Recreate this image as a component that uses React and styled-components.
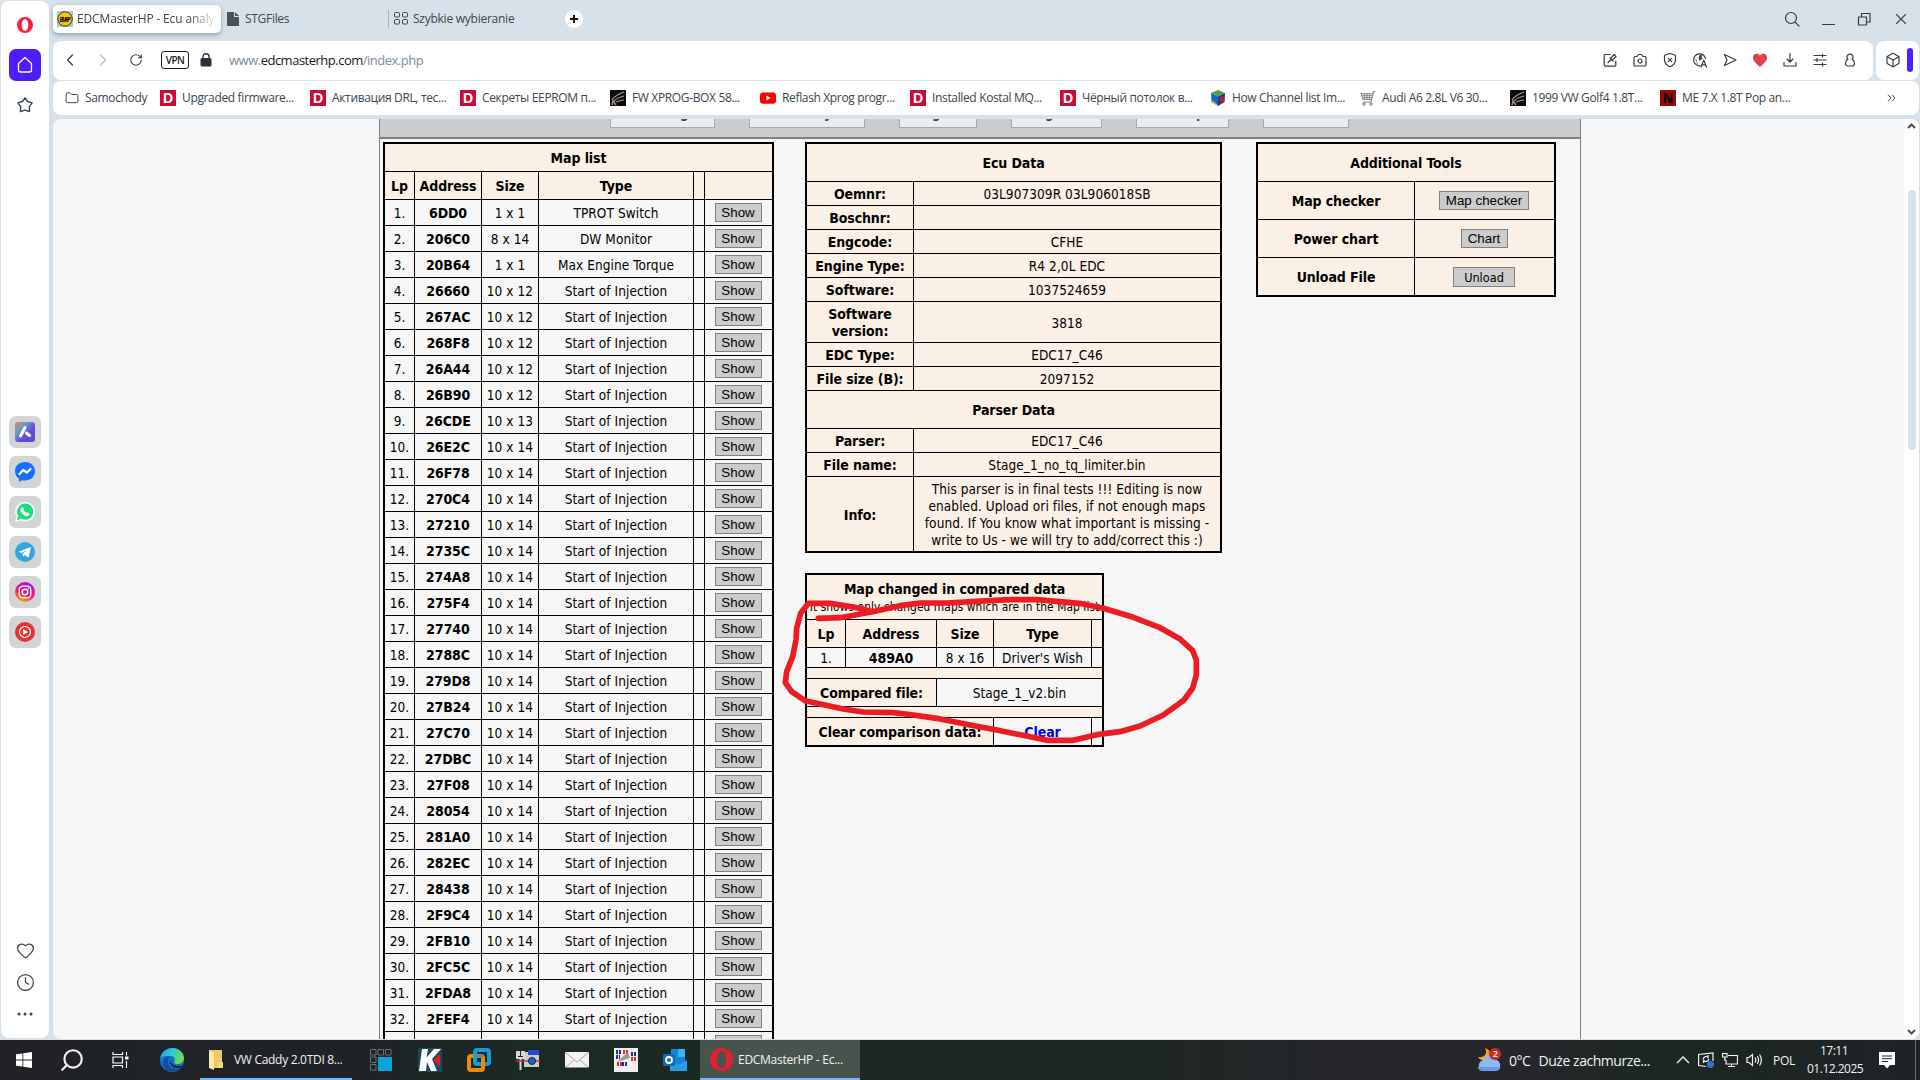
import React from "react";
import styled, { createGlobalStyle } from "styled-components";
import {
  Search,
  Heart,
  Clock,
  Box,
  X,
  ChevronLeft,
  ChevronRight,
  RotateCw,
  Folder,
} from "lucide-react";

const GlobalStyle = createGlobalStyle`
  * {
    box-sizing: border-box;
  }
  body {
    margin: 0;
    overflow: hidden;
    background: #d7e1e9;
    font-family: "Open Sans", "Noto Sans", sans-serif;
  }
`;

const Screen = styled.div`
  display: flex;
  flex-direction: column;
  width: 1920px;
  height: 1080px;
  overflow: hidden;
`;

const Browser = styled.div`
  display: flex;
  gap: 4px;
  height: 1040px;
  padding: 1px 1px 1px;
  background: #d7e1e9;
`;

/* ---------- sidebar ---------- */

const Sidebar = styled.div`
  display: flex;
  flex-direction: column;
  align-items: center;
  width: 48px;
  height: 1037px;
  padding-top: 8px;
  background: #fff;
  border-radius: 8px;
  color: #3a444d;
`;

const SideItem = styled.div`
  display: flex;
  align-items: center;
  justify-content: center;
  width: 32px;
  height: 32px;
  margin-bottom: 8px;
  border-radius: 7px;
  background: ${({ $bg }) => $bg || "transparent"};
  flex: none;
`;

const Messengers = styled.div`
  margin-top: 287px;
`;

const SideBottom = styled.div`
  margin-top: 278px;

  & > div {
    margin-bottom: 0;
  }
`;

/* ---------- tabs ---------- */

const Main = styled.div`
  display: flex;
  flex-direction: column;
  flex: 1;
  min-width: 0;
`;

const TabStrip = styled.div`
  display: flex;
  height: 40px;
  padding-top: 4px;
  color: #3c454d;
`;

const Tab = styled.div`
  display: flex;
  align-items: center;
  gap: ${({ $gap }) => $gap || 4}px;
  width: ${({ $w }) => $w}px;
  height: 28px;
  padding: 0 4px 1px ${({ $pl }) => $pl || 4}px;
  font-size: 12px;
  letter-spacing: ${({ $ls }) => $ls || 0}px;
  white-space: nowrap;
  border-radius: 5px;

  svg {
    flex: none;
  }
`;

const ActiveTab = styled(Tab)`
  background: #fff;
  box-shadow: 0 2px 4px rgba(60, 80, 100, 0.45);
`;

const TabTitle = styled.span`
  flex: 1;
  min-width: 0;
  overflow: hidden;
  mask-image: linear-gradient(90deg, #000 80%, transparent 100%);
`;

const TabDivider = styled.div`
  width: 1px;
  height: 18px;
  margin: 5px 1px 0 0;
  background: #a9b3bb;
`;

const NewTab = styled.div`
  display: flex;
  align-items: center;
  justify-content: center;
  width: 18px;
  height: 18px;
  margin: 5px 0 0 51px;
  border-radius: 9px;
  background: #fff;
`;

const WindowButtons = styled.div`
  display: flex;
  align-items: center;
  height: 28px;
  gap: 20px;
  margin-left: auto;
  margin-right: 9px;
`;

/* ---------- address bar ---------- */

const AddressRow = styled.div`
  display: flex;
  gap: 3px;
  height: 39px;
  margin-bottom: 1px;
`;

const AddressBar = styled.div`
  display: flex;
  align-items: center;
  flex: 1;
  padding: 0 15px 2px 0;
  background: #fff;
  border-radius: 8px;
  color: #343d45;
`;

const NavButton = styled.div`
  display: flex;
  align-items: center;
  justify-content: center;
  width: 33px;
  height: 16px;
  color: ${({ $dim }) => ($dim ? "#b9bec3" : "#343d45")};
`;

const Vpn = styled.div`
  width: 28px;
  height: 18px;
  margin-left: 9px;
  border: 1px solid #15191c;
  border-radius: 3px;
  font-size: 10px;
  font-weight: 600;
  letter-spacing: -0.6px;
  line-height: 16px;
  text-align: center;
  color: #15191c;
`;

const Lock = styled.svg`
  margin-left: 11px;
`;

const Url = styled.div`
  margin-left: 17px;
  font-size: 13px;
  letter-spacing: -0.5px;
  color: #7c8b99;
  white-space: nowrap;

  b {
    font-weight: 400;
    color: #15191c;
  }
`;

const Actions = styled.div`
  display: flex;
  gap: 14px;
  height: 16px;
  margin-left: auto;
`;

const ExtensionBox = styled.div`
  display: flex;
  align-items: center;
  gap: 6px;
  width: 43px;
  padding: 0 0 1px 9px;
  background: #fff;
  border-radius: 8px;
`;

const PurpleBar = styled.div`
  width: 6px;
  height: 24px;
  border-radius: 3px;
  background: #4c1dff;
`;

/* ---------- bookmarks ---------- */

const BookmarkBar = styled.div`
  display: flex;
  align-items: center;
  height: 34px;
  margin-bottom: 4px;
  padding: 0 0 1px 12px;
  background: #fff;
  border-radius: 8px;
  font-size: 12px;
  color: #3c454d;
`;

const Bookmark = styled.div`
  display: flex;
  align-items: center;
  gap: 6px;
  width: ${({ $w }) => $w || 150}px;
  line-height: 16px;
  white-space: nowrap;
  letter-spacing: -0.35px;

  svg {
    flex: none;
  }
`;

const LetterIcon = styled.div`
  width: 16px;
  height: 16px;
  background: ${({ $bg }) => $bg};
  color: ${({ $fg }) => $fg};
  font-family: "Liberation Sans", sans-serif;
  font-size: 14px;
  font-weight: 700;
  line-height: 16px;
  letter-spacing: 0;
  text-align: center;
`;

const More = styled.span`
  display: flex;
  margin-left: auto;
  margin-right: 23px;
`;

/* ---------- page ---------- */

const Page = styled.div`
  display: flex;
  height: 920px;
  padding-left: 326px;
  background: #f6f6f6;
  border-radius: 8px;
  overflow: hidden;
`;

const Site = styled.div`
  width: 1202px;
  border-left: 1px solid #808080;
  border-right: 1px solid #808080;
  font-family: "DejaVu Sans Condensed", "DejaVu Sans", sans-serif;
  font-stretch: condensed;
  font-size: 13.4px;
  line-height: 17px;
  color: #000;
`;

const SiteMenu = styled.div`
  display: flex;
  gap: 34px;
  height: 20px;
  padding-left: 230px;
  background: #ccc;
  border-bottom: 2px solid #808080;
`;

const MenuButton = styled.div`
  width: ${({ $w }) => $w}px;
  height: 9px;
  padding-left: ${({ $pad }) => $pad}px;
  overflow: hidden;
  border: 1px solid #a9a9a9;
  border-top: none;
  background: #ededed;
  color: #2f4f4f;
  font-weight: 700;

  span {
    display: block;
    margin-top: -14px;
  }
`;

const Content = styled.div`
  display: flex;
  align-items: flex-start;
  padding: 3px;
`;

const Middle = styled.div`
  display: flex;
  flex-direction: column;
  align-items: flex-start;
  gap: 20px;
  margin: 0 34px 0 31px;
`;

const Table = styled.div`
  display: grid;
  flex: none;
  grid-template-columns: ${({ $cols }) => $cols};
  grid-template-rows: ${({ $rows }) => $rows || "none"};
  grid-auto-rows: 25px;
  gap: 1px;
  padding: 2px;
  background: #000;
`;

const Cell = styled.div`
  display: flex;
  flex-direction: column;
  align-items: center;
  justify-content: center;
  grid-column: span ${({ $span }) => $span || 1};
  padding-top: ${({ $top }) => $top ?? 1}px;
  background: ${({ $plain }) => ($plain ? "#f6f6f6" : "#faf0e6")};
  text-align: center;
  white-space: ${({ $wrap }) => ($wrap ? "normal" : "nowrap")};
  font-weight: ${({ $bold }) => ($bold ? 700 : 400)};
  font-size: ${({ $bold }) => ($bold ? 14 : 13.5)}px;
  letter-spacing: ${({ $bold }) => ($bold ? -0.1 : 0.08)}px;
  color: ${({ $color }) => $color || "#000"};
`;

const Note = styled.span`
  margin-top: 1px;
  font-size: 11.8px;
  font-weight: 400;
  letter-spacing: 0.1px;
`;

const Button = styled.button`
  height: ${({ $tall }) => ($tall ? 20 : 19)}px;
  width: ${({ $w }) => $w || 47}px;
  margin: ${({ $tall }) => ($tall ? "1px 1px 0 0" : "0 1px 0 0")};
  padding: 1px 0 0;
  border: 1px solid #808080;
  background: #ccc;
  color: #000;
  font-family: ${({ $tall }) =>
    $tall ? '"DejaVu Sans Condensed", "DejaVu Sans"' : '"Liberation Sans"'}, sans-serif;
  font-size: ${({ $tall }) => ($tall ? 12.6 : 13.33)}px;
  line-height: 16px;
`;

const Scrollbar = styled.div`
  display: flex;
  flex-direction: column;
  align-items: center;
  width: 15px;
  height: 920px;
  margin-left: auto;
  padding: 4px 0;
  background: #fff;
`;

const Thumb = styled.div`
  width: 8px;
  height: 260px;
  margin: 61px 0 auto;
  border-radius: 4px;
  background: #d7e1e9;
`;

/* freehand marker stroke lying over the page */
const Marker = styled.svg`
  position: absolute;
  left: 770px;
  top: 560px;
  pointer-events: none;
`;

/* ---------- taskbar ---------- */

const Taskbar = styled.div`
  display: flex;
  height: 40px;
  background: linear-gradient(90deg, #202227 0, #1f2327 370px, #1b2a22 520px, #1b2922 1000px, #24252a 1350px, #26272b 1540px, #1c2722 1640px, #1f2326 100%);
  color: #f2f2f2;
`;

const TaskIcon = styled.div`
  display: flex;
  align-items: center;
  justify-content: center;
  width: ${({ $w }) => $w || 48}px;
  height: 40px;
  padding-left: ${({ $shift }) => $shift || 0}px;
`;

const FlippedSearch = styled(Search)`
  transform: scaleX(-1);
`;

const TaskWindow = styled.div`
  display: flex;
  align-items: center;
  gap: ${({ $gap }) => $gap}px;
  width: ${({ $w }) => $w}px;
  height: 40px;
  padding: 1px 0 0 ${({ $pl }) => $pl || 9}px;
  border-bottom: 2px solid #76b9ed;
  background: ${({ $active }) => ($active ? "#47544d" : "transparent")};
  font-size: 12px;
  letter-spacing: ${({ $ls }) => $ls}px;
  white-space: nowrap;
`;

const Tray = styled.div`
  display: flex;
  align-items: center;
  margin-left: auto;
  font-size: 12px;
  white-space: nowrap;
`;

const Weather = styled.div`
  display: flex;
  align-items: center;
  width: 199px;
  font-size: 14px;
  letter-spacing: -0.45px;

  span {
    margin-left: 8px;
  }
`;

const TrayIcons = styled.div`
  display: flex;
  gap: 8px;
  width: 97px;
`;

const Lang = styled.div`
  width: 34px;
  letter-spacing: -0.3px;
`;

const DateTime = styled.div`
  width: 54px;
  line-height: 18px;
  text-align: center;
  letter-spacing: -0.5px;
`;

const Notifications = styled.svg`
  margin-left: 18px;
`;

const ShowDesktop = styled.div`
  width: 5px;
  height: 40px;
  margin-left: 20px;
  border-left: 1px solid #6d6f71;
`;

/* ---------- drawings ---------- */

const OperaLogo = ({ size = 16, color = "#fa1e3c" }) => (
  <svg width={size} height={size} viewBox="0 0 24 24">
    <path
      fill={color}
      fillRule="evenodd"
      d="M12 0a12 12 0 1 0 0 24a12 12 0 1 0 0-24zM12 3.2c2.9 0 4.9 3.9 4.9 8.8s-2 8.8-4.9 8.8s-4.9-3.9-4.9-8.8s2-8.8 4.9-8.8z"
    />
  </svg>
);

const StarIcon = () => (
  <svg width="18" height="18" viewBox="0 0 18 18" fill="none" stroke="#3a444d" strokeWidth="1.4" strokeLinejoin="round">
    <path d="M9 1.8l2.5 3.7 4.6 1.4-2.7 3.8.1 4.8L9 14.2l-4.5 1.3.1-4.8-2.7-3.8 4.6-1.4z" />
  </svg>
);

const AriaIcon = () => (
  <svg width="20" height="20" viewBox="0 0 20 20">
    <defs>
      <linearGradient id="aria" x1="0" y1="0" x2="1" y2="1">
        <stop offset="0" stopColor="#f08068" />
        <stop offset=".35" stopColor="#5a9ad0" />
        <stop offset=".6" stopColor="#6a48d8" />
        <stop offset="1" stopColor="#4a50c0" />
      </linearGradient>
    </defs>
    <rect width="20" height="20" rx="3" fill="url(#aria)" />
    <path d="M5.5 14L10 5.5M11.5 11l3 2.5" stroke="#fff" strokeWidth="3" strokeLinecap="round" />
  </svg>
);

const MessengerIcon = () => (
  <svg width="20" height="20" viewBox="0 0 20 20">
    <path fill="#1670ff" d="M10 0c5.8 0 10 4 10 9.3s-4.3 9.3-10 9.3c-1 0-2-.2-2.9-.4L4 20v-3.3C1.5 15 0 12.4 0 9.3 0 4 4.2 0 10 0z" />
    <path d="M4.5 12l3.7-4 3.6 2.7L15.500 7" fill="none" stroke="#fff" strokeWidth="2.2" strokeLinejoin="round" strokeLinecap="round" />
  </svg>
);

const WhatsappIcon = () => (
  <svg width="20" height="20" viewBox="0 0 20 20">
    <path fill="#fff" d="M10.2 0A9.8 9.8 0 1 1 5.3 18.3L0 20l1.6-5.2A9.8 9.8 0 0 1 10.2 0z" />
    <circle cx="10.2" cy="9.7" r="8.1" fill="#16e07a" />
    <path d="M2 18l1-4 3 3z" fill="#16e07a" />
    <path d="M6.8 5.5c1.5-1 2 .8 2.3 2-.8 1-.3 1.5 2.3 3.6 1-.9 1.4-1 3.2.6.2 2.2-2.4 3-4.4 2.2C7.3 12.6 4.8 9 5.6 6.9z" fill="#fff" />
  </svg>
);

const TelegramIcon = () => (
  <svg width="20" height="20" viewBox="0 0 20 20">
    <circle cx="10" cy="10" r="10" fill="#34a6de" />
    <path d="M3.5 9.7L15 5.2c.6-.2 1 .1.8.9l-2 8.6c-.1.7-.5.8-1 .5L9.7 13l-1.6 1.5-.5-2.8 5-4.2-6 3.5z" fill="#fff" />
  </svg>
);

const InstagramIcon = () => (
  <svg width="20" height="20" viewBox="0 0 20 20">
    <defs>
      <linearGradient id="insta" x1=".3" y1="1" x2=".7" y2="0">
        <stop offset="0" stopColor="#ffb000" />
        <stop offset=".4" stopColor="#ff1466" />
        <stop offset="1" stopColor="#a010ff" />
      </linearGradient>
    </defs>
    <circle cx="10" cy="10" r="10" fill="url(#insta)" />
    <rect x="4.2" y="4.2" width="11.6" height="11.6" rx="3.5" fill="none" stroke="#fff" strokeWidth="1.4" />
    <circle cx="10" cy="10" r="2.8" fill="none" stroke="#fff" strokeWidth="1.4" />
    <circle cx="13.4" cy="6.7" r=".8" fill="#fff" />
  </svg>
);

const MusicIcon = () => (
  <svg width="20" height="20" viewBox="0 0 20 20">
    <circle cx="10" cy="10" r="10" fill="#e23434" />
    <circle cx="10" cy="10" r="5.5" fill="none" stroke="#fff" strokeWidth="1.2" />
    <path d="M8 7l5 3-5 3z" fill="#fff" />
  </svg>
);

const SiteFavicon = () => (
  <svg width="16" height="16" viewBox="0 0 16 16">
    <rect width="16" height="16" fill="#8fd0ec" />
    <circle cx="8" cy="8" r="7.2" fill="#f5c211" stroke="#4a3d0c" />
    <text x="8" y="10.6" fontSize="6.5" fontWeight="700" fontStyle="italic" textAnchor="middle" textLength="11" fontFamily="Liberation Sans" fill="#1c1600">EMHP</text>
  </svg>
);

const FileIcon = () => (
  <svg width="12" height="14" viewBox="0 0 12 14" fill="#4f5255">
    <path d="M0 0h7v5h5v9H0z" />
    <path d="M8 0l4 4H8z" />
  </svg>
);

const SpeedDialIcon = () => (
  <svg width="14" height="13" viewBox="0 0 14 13" fill="none" stroke="#3c454d">
    <rect x=".5" y=".5" width="5" height="4.5" rx="1" />
    <rect x="8.5" y=".5" width="5" height="4.5" rx="1" />
    <rect x=".5" y="7.5" width="5" height="4.5" rx="1" />
    <rect x="8.5" y="7.5" width="5" height="4.5" rx="1" />
  </svg>
);

const StrokeIcon = ({ d, size = 16, children }) => (
  <svg width={size} height={size} viewBox="0 0 16 16" fill="none" stroke="#343d45" strokeWidth="1.2" strokeLinecap="round" strokeLinejoin="round">
    <path d={d} />
    {children}
  </svg>
);

const ClawIcon = () => (
  <svg width="16" height="16" viewBox="0 0 16 16">
    <rect width="16" height="16" fill="#0b0b0b" />
    <path d="M2 10C5 5 9 4 14 2M4 11c3-3 6-4 10-5M6 12c3-1.5 5-1.8 8-2" stroke="#9a9a98" fill="none" strokeWidth="1.2" />
    <path d="M2 15l1-4 3 4" stroke="#b98a68" fill="none" strokeWidth="1.5" />
  </svg>
);

const YoutubeIcon = () => (
  <svg width="16" height="16" viewBox="0 0 16 16">
    <rect y="2.4" width="16" height="11.4" rx="3" fill="#f00" />
    <path d="M6.3 5.6l4.5 2.5-4.5 2.5z" fill="#fff" />
  </svg>
);

const CubeIcon = () => (
  <svg width="16" height="16" viewBox="0 0 16 16">
    <path d="M8 0l7 3-7 3.5L1 3z" fill="#4aa83c" />
    <path d="M1 3l7 3.5V16l-6.5-4z" fill="#1c62c8" />
    <path d="M15 3L8 6.5V16l6.5-4z" fill="#173a8c" />
    <path d="M13.5 6.5L10.5 8v2l3-.5v2.500L10 13.5" stroke="#d02020" strokeWidth="1.5" fill="none" />
    <path d="M2 11l5 4" stroke="#e8b820" strokeWidth="1.5" />
  </svg>
);

const CartIcon = () => (
  <svg width="16" height="16" viewBox="0 0 16 16" fill="none" stroke="#8f8f8f" strokeWidth="1.2">
    <path d="M1 3.5h12L11.5 9.5H3zM15.5 1.5h-2L11 12H3M2 5.5h10.5M2.5 7.5H12M4.5 3.5v6M7 3.5v6M9.5 3.5v6" />
    <circle cx="4" cy="14" r="1.2" />
    <circle cx="11" cy="14" r="1.2" />
  </svg>
);

const VmwareIcon = () => (
  <svg width="24" height="24" viewBox="0 0 24 24" fill="none" strokeWidth="4">
    <rect x="8" y="2" width="14" height="14" rx="2" stroke="#149bd8" />
    <rect x="2" y="8" width="14" height="14" rx="2" stroke="#f38b00" />
    <path d="M8 12V8h8" stroke="#149bd8" strokeWidth="3" />
  </svg>
);

const EdgeIcon = () => (
  <svg width="24" height="24" viewBox="0 0 24 24">
    <defs>
      <linearGradient id="edgeTop" x1="0" y1="0" x2="1" y2=".4">
        <stop offset="0" stopColor="#1ba0e0" />
        <stop offset=".5" stopColor="#30c4dc" />
        <stop offset="1" stopColor="#66e04c" />
      </linearGradient>
    </defs>
    <circle cx="12" cy="12" r="12" fill="#1272c8" />
    <path d="M.2 10.5C1.5 3.5 7 0 12.5 0 19 0 24 4.8 24 10c0 3.8-2.8 6-6 6-3 0-4.5-1.3-3.5-2.8 1-2-.2-5.2-4.2-5.200C6 7.5 2 8.5.2 10.5z" fill="url(#edgeTop)" />
    <path d="M8 13c0 6 5 9.5 12 7-4 5.3-12 5-15.5 0C1.5 16 3 9.8 9.500 8 8.5 9.5 8 11 8 13z" fill="#0f4fa0" />
    <path d="M10.500 11.500c-.5 5 5 7.800 12 6l-1.500 2C14 21.500 8.500 17.500 10.500 11.500z" fill="#1d2228" />
  </svg>
);

const mapRows = [
  ["6DD0", "1 x 1", "TPROT Switch"],
  ["206C0", "8 x 14", "DW Monitor"],
  ["20B64", "1 x 1", "Max Engine Torque"],
  ["26660", "10 x 12"],
  ["267AC", "10 x 12"],
  ["268F8", "10 x 12"],
  ["26A44", "10 x 12"],
  ["26B90", "10 x 12"],
  ["26CDE", "10 x 13"],
  ...[
    "26E2C", "26F78", "270C4", "27210", "2735C", "274A8", "275F4", "27740",
    "2788C", "279D8", "27B24", "27C70", "27DBC", "27F08", "28054", "281A0",
    "282EC", "28438", "2F9C4", "2FB10", "2FC5C", "2FDA8", "2FEF4",
  ].map((address) => [address, "10 x 14"]),
];

const ecuRows = [
  ["Oemnr:", "03L907309R 03L906018SB"],
  ["Boschnr:", ""],
  ["Engcode:", "CFHE"],
  ["Engine Type:", "R4 2,0L EDC"],
  ["Software:", "1037524659"],
  ["Software version:", "3818"],
  ["EDC Type:", "EDC17_C46"],
  ["File size (B):", "2097152"],
];

const infoLines = [
  "This parser is in final tests !!! Editing is now",
  "enabled. Upload ori files, if not enough maps",
  "found. If You know what important is missing -",
  "write to Us - we will try to add/correct this :)",
];

const dIcon = <LetterIcon $bg="#cc0a34" $fg="#fff">D</LetterIcon>;

const bookmarks = [
  [dIcon, "Upgraded firmware..."],
  [dIcon, "Активация DRL, тес..."],
  [dIcon, "Секреты EEPROM п..."],
  [<ClawIcon />, "FW XPROG-BOX 58..."],
  [<YoutubeIcon />, "Reflash Xprog progr..."],
  [dIcon, "Installed Kostal MQ..."],
  [dIcon, "Чёрный потолок в..."],
  [<CubeIcon />, "How Channel list Im..."],
  [<CartIcon />, "Audi A6 2.8L V6 30..."],
  [<ClawIcon />, "1999 VW Golf4 1.8T..."],
  [<LetterIcon $bg="#980808" $fg="#000">N</LetterIcon>, "ME 7.X 1.8T Pop an..."],
];

const SideBar = () => (
  <Sidebar>
    <SideItem><OperaLogo /></SideItem>
    <SideItem $bg="#4c1dff">
      <svg width="16" height="18" viewBox="0 0 16 18" fill="none" stroke="#fff" strokeWidth="1.3" strokeLinejoin="round">
        <path d="M1.5 7.5L8 1.5l6.5 6v6.5q0 2-2 2h-9q-2 0-2-2z" />
      </svg>
    </SideItem>
    <SideItem><StarIcon /></SideItem>
    <Messengers>
      <SideItem $bg="#d3d4d6"><AriaIcon /></SideItem>
      <SideItem $bg="#d3d4d6"><MessengerIcon /></SideItem>
      <SideItem $bg="#d3d4d6"><WhatsappIcon /></SideItem>
      <SideItem $bg="#d3d4d6"><TelegramIcon /></SideItem>
      <SideItem $bg="#d3d4d6"><InstagramIcon /></SideItem>
      <SideItem $bg="#d3d4d6"><MusicIcon /></SideItem>
    </Messengers>
    <SideBottom>
      <SideItem><Heart size={19} strokeWidth={1.6} /></SideItem>
      <SideItem><Clock size={19} strokeWidth={1.6} /></SideItem>
      <SideItem>
        <svg width="16" height="4" viewBox="0 0 16 4" fill="#3a444d">
          <circle cx="2" cy="2" r="1.5" />
          <circle cx="8" cy="2" r="1.5" />
          <circle cx="14" cy="2" r="1.5" />
        </svg>
      </SideItem>
    </SideBottom>
  </Sidebar>
);

const Tabs = () => (
  <TabStrip>
    <ActiveTab $w={168} $ls={-0.15}>
      <SiteFavicon />
      <TabTitle>EDCMasterHP - Ecu analyzer</TabTitle>
    </ActiveTab>
    <Tab $w={167} $gap={6} $pl={6} $ls={-0.3}>
      <FileIcon />
      STGFiles
    </Tab>
    <TabDivider />
    <Tab $w={124} $gap={5} $ls={-0.25}>
      <SpeedDialIcon />
      Szybkie wybieranie
    </Tab>
    <NewTab>
      <svg width="10" height="10" viewBox="0 0 10 10" stroke="#15191c" strokeWidth="2">
        <path d="M5 1v8M1 5h8" />
      </svg>
    </NewTab>
    <WindowButtons>
      <StrokeIcon d="M11.300 11.300L15 15">
        <circle cx="7" cy="7" r="5.5" />
      </StrokeIcon>
      <StrokeIcon d="M2.500 13.500h12" />
      <StrokeIcon d="M2.500 6h8v8h-8zM5.500 6V2.500H14V11h-3.500" />
      <X size={18} strokeWidth={1.5} />
    </WindowButtons>
  </TabStrip>
);

const Address = () => (
  <AddressRow>
    <AddressBar>
      <NavButton><ChevronLeft size={20} strokeWidth={1.5} /></NavButton>
      <NavButton $dim><ChevronRight size={20} strokeWidth={1.5} /></NavButton>
      <NavButton><RotateCw size={14} strokeWidth={1.8} /></NavButton>
      <Vpn>VPN</Vpn>
      <Lock width="12" height="14" viewBox="0 0 12 14">
        <rect x=".5" y="5" width="11" height="8.5" rx="1.5" fill="#2a333b" />
        <path d="M3 6V3.500a3 2.800 0 0 1 6 0V6" fill="none" stroke="#2a333b" strokeWidth="1.4" />
      </Lock>
      <Url>www.<b>edcmasterhp.com</b>/index.php</Url>
      <Actions>
        <StrokeIcon d="M8 2.500H3q-.8 0-.8.800v10q0 .8.800.8h10q.8 0 .8-.8V9M6 10.500l3-3M8 6l3 3M9 6l3-3.500L14 4.500 10.500 8" />
        <StrokeIcon d="M2 5.500q0-1 1-1h2L6.500 2.500h3L11 4.500h2q1 0 1 1V13q0 1-1 1H3q-1 0-1-1z">
          <circle cx="8" cy="9" r="2" />
        </StrokeIcon>
        <StrokeIcon d="M8 1.500l5.500 1.700V8c0 3.500-2 5.300-5.500 6.700C4.500 13.300 2.500 11.500 2.500 8V3.200zM6.300 6.300l3.400 3.400M9.700 6.300L6.300 9.700" />
        <StrokeIcon d="M8 13.800A6 6 0 1 1 13.500 6.500M9 15l2.800-7 2.700 7M10 12.800h3.700">
          <path d="M8 2.500l2.500 1-1 2 1.500 1.500-2 .5L7.500 9 6.500 6z" fill="#343d45" stroke="none" />
          <path d="M2.500 6L5 8.500 4.500 11 6.500 13z" fill="#343d45" stroke="none" />
        </StrokeIcon>
        <StrokeIcon d="M2.500 2.500L14 8 2.500 13.500 5 8z" />
        <svg width="16" height="16" viewBox="0 0 16 16">
          <path d="M8 15C3 10.500 1 8.500 1 5.500 1 1.500 6 .5 8 3.800 10 .5 15 1.500 15 5.500c0 3-2 5-7 9.500z" fill="#df4344" />
        </svg>
        <StrokeIcon d="M8 1.500v8.500M5 7l3 3 3-3M2 10.500V14h12v-3.500" />
        <StrokeIcon d="M2 3.500h12M2 8h12M2 12.500h12M10.500 2v3M5 6.500v3M10.500 11v3" />
        <StrokeIcon d="M5.900 7.300a3 3 0 1 1 4.200 0C11.500 8 12.500 9.500 12.500 11.500 12.500 13.300 11.500 14 10 14H6C4.500 14 3.500 13.300 3.500 11.500 3.500 9.500 4.500 8 5.900 7.300z" />
      </Actions>
    </AddressBar>
    <ExtensionBox>
      <Box size={16} strokeWidth={1.8} color="#343d45" />
      <PurpleBar />
    </ExtensionBox>
  </AddressRow>
);

const App = () => {
  return (
    <Screen>
      <GlobalStyle />
      <Browser>
        <SideBar />
        <Main>
          <Tabs />
          <Address />
          <BookmarkBar>
            <Bookmark $w={95}>
              <Folder size={14} strokeWidth={1.7} />
              Samochody
            </Bookmark>
            {bookmarks.map(([icon, label]) => (
              <Bookmark key={label}>
                {icon}
                {label}
              </Bookmark>
            ))}
            <More>
              <svg width="9" height="8" viewBox="0 0 9 8" fill="none" stroke="#3c454d">
                <path d="M1 .7L4 4 1 7.300M5 .7L8 4 5 7.300" />
              </svg>
            </More>
          </BookmarkBar>

          <Page>
            <Site>
              <SiteMenu>
                <MenuButton $w={105} $pad={69}><span>g</span></MenuButton>
                <MenuButton $w={116} $pad={74}><span>y</span></MenuButton>
                <MenuButton $w={78} $pad={32}><span>g</span></MenuButton>
                <MenuButton $w={91} $pad={33}><span>g</span></MenuButton>
                <MenuButton $w={93} $pad={59}><span>p</span></MenuButton>
                <MenuButton $w={86} />
              </SiteMenu>
              <Content>
                <Table $cols="29px 66px 56px 154px 10px 67px" $rows="27px 27px">
                  <Cell $bold $span={6}>Map list</Cell>
                  <Cell $bold>Lp</Cell>
                  <Cell $bold>Address</Cell>
                  <Cell $bold>Size</Cell>
                  <Cell $bold>Type</Cell>
                  <Cell />
                  <Cell />
                  {mapRows.map(([address, size, type], i) => (
                    <React.Fragment key={address}>
                      <Cell $plain>{i + 1}.</Cell>
                      <Cell $plain $bold>{address}</Cell>
                      <Cell $plain>{size}</Cell>
                      <Cell $plain>{type || "Start of Injection"}</Cell>
                      <Cell $plain />
                      <Cell $plain $top={0}><Button>Show</Button></Cell>
                    </React.Fragment>
                  ))}
                  <Cell $plain />
                  <Cell $plain />
                  <Cell $plain />
                  <Cell $plain />
                  <Cell $plain />
                  <Cell $plain $top={0}><Button /></Cell>
                </Table>

                <Middle>
                  <Table
                    $cols="106px 306px"
                    $rows="37px repeat(5, 23px) 40px 23px 23px 37px 23px 23px 74px"
                  >
                    <Cell $bold $span={2}>Ecu Data</Cell>
                    {ecuRows.map(([name, value]) => (
                      <React.Fragment key={name}>
                        <Cell $bold $wrap>{name}</Cell>
                        <Cell $top={value === "3818" ? 3 : 1}>{value}</Cell>
                      </React.Fragment>
                    ))}
                    <Cell $bold $span={2}>Parser Data</Cell>
                    <Cell $bold>Parser:</Cell>
                    <Cell>EDC17_C46</Cell>
                    <Cell $bold>File name:</Cell>
                    <Cell>Stage_1_no_tq_limiter.bin</Cell>
                    <Cell $bold $top={3}>Info:</Cell>
                    <Cell>
                      {infoLines.map((line) => (
                        <span key={line}>{line}</span>
                      ))}
                    </Cell>
                  </Table>

                  <Table
                    $cols="38px 90px 56px 97px 10px"
                    $rows="44px 27px 19px 10px 27px 10px 27px"
                  >
                    <Cell $bold $span={5} $top={3}>
                      Map changed in compared data
                      <Note>It shows only changed maps which are in the Map list</Note>
                    </Cell>
                    <Cell $bold>Lp</Cell>
                    <Cell $bold>Address</Cell>
                    <Cell $bold>Size</Cell>
                    <Cell $bold>Type</Cell>
                    <Cell />
                    <Cell $plain>1.</Cell>
                    <Cell $plain $bold>489A0</Cell>
                    <Cell $plain>8 x 16</Cell>
                    <Cell $plain>Driver's Wish</Cell>
                    <Cell $plain />
                    <Cell $span={5} />
                    <Cell $bold $span={2}>Compared file:</Cell>
                    <Cell $plain $span={3}>Stage_1_v2.bin</Cell>
                    <Cell $span={5} />
                    <Cell $bold $span={3}>Clear comparison data:</Cell>
                    <Cell $plain $bold $color="#0000ee">Clear</Cell>
                    <Cell $plain />
                  </Table>
                </Middle>

                <Table $cols="156px 139px" $rows="repeat(4, 37px)">
                  <Cell $bold $span={2}>Additional Tools</Cell>
                  <Cell $bold>Map checker</Cell>
                  <Cell $top={0}><Button $w={90}>Map checker</Button></Cell>
                  <Cell $bold>Power chart</Cell>
                  <Cell $top={0}><Button>Chart</Button></Cell>
                  <Cell $bold>Unload File</Cell>
                  <Cell $top={0}><Button $w={62} $tall>Unload</Button></Cell>
                </Table>
              </Content>
            </Site>
            <Scrollbar>
              <svg width="9" height="6" viewBox="0 0 9 6" fill="none" stroke="#505050" strokeWidth="2">
                <path d="M1 5l3.500-3.500L8 5" />
              </svg>
              <Thumb />
              <svg width="9" height="6" viewBox="0 0 9 6" fill="none" stroke="#505050" strokeWidth="2">
                <path d="M1 1l3.500 3.500L8 1" />
              </svg>
            </Scrollbar>
          </Page>
        </Main>
      </Browser>

      <Marker width="450" height="200" viewBox="0 0 1350 600">
        <path
          fill="none"
          stroke="#ed1c24"
          strokeWidth="17"
          strokeLinecap="round"
          strokeLinejoin="round"
          d="M145 175L210 173 300 157 390 137 450 129 530 129 620 124 720 119 800 119 860 124 935 131 1000 145 1090 172 1170 203 1230 237 1268 272 1279 300 1279 345 1268 385 1240 422 1180 465 1110 498 1050 515 980 524 910 541 830 541 770 528 680 510 600 495 500 475 430 465 370 458 280 456 220 447 105 422 65 395 46 368 50 335 68 290 78 240 80 205 92 160 115 130 180 130 250 141 310 155"
        />
      </Marker>

      <Taskbar>
        <TaskIcon>
          <svg width="16" height="16" viewBox="0 0 16 16" fill="#fff">
            <path d="M0 2.300L6.500 1.400V7.600H0zM7.300 1.300L16 0v7.600H7.300zM0 8.400h6.500v6.200L0 13.700zM7.300 8.400H16V16l-8.700-1.200z" />
          </svg>
        </TaskIcon>
        <TaskIcon>
          <FlippedSearch size={26} strokeWidth={2} />
        </TaskIcon>
        <TaskIcon>
          <svg width="17" height="16" viewBox="0 0 17 16" fill="none" stroke="#fff" strokeWidth="1.2">
            <path d="M1 0v2.500h9.500V0M1 5h9.500v6H1zM1 16v-2.500h9.500V16M14.500 0v3.500M14.500 9v7" />
            <path d="M13 6h3.500" strokeWidth="3" />
          </svg>
        </TaskIcon>
        <TaskIcon $w={56}><EdgeIcon /></TaskIcon>
        <TaskWindow $w={152} $gap={10} $ls={-0.3}>
          <svg width="15" height="20" viewBox="0 0 15 20">
            <path d="M0 0h13v18H0z" fill="#efc864" />
            <path d="M0 0l5 3v17l-5-2z" fill="#fbe8a6" />
            <path d="M9 12h5v6H9z" fill="#f5d77e" />
          </svg>
          VW Caddy 2.0TDI 8...
        </TaskWindow>
        <TaskIcon $w={57}>
          <svg width="22" height="22" viewBox="0 0 22 22">
            <path d="M.5.5H6V6H.5zM8 .5h5.500V6H8zM15.500.5H21V6h-5.500zM.5 8H6v5.500H.5zM.5 15.500H6V21H.5z" fill="none" stroke="#6a7075" />
            <rect x="8" y="8" width="14" height="14" fill="#07a5e0" />
          </svg>
        </TaskIcon>
        <TaskIcon $w={42}>
          <svg width="24" height="24" viewBox="0 0 24 24">
            <rect width="24" height="24" fill="#174a5e" />
            <path d="M4 1h6L8.500 9.500 16 1h7l-9 10 5 12h-6l-4-9-1 9H1z" fill="#fff" />
            <path d="M22 6v13l-7-7z" fill="#e01c28" />
          </svg>
        </TaskIcon>
        <TaskIcon $w={56}><VmwareIcon /></TaskIcon>
        <TaskIcon $w={42}>
          <svg width="24" height="20" viewBox="0 0 24 20">
            <rect x="8" y="2" width="15" height="15" fill="#c8ccd0" />
            <rect x="12" y="0" width="11" height="5" fill="#1c50d0" />
            <path d="M1 1v7h7V1M3 1v5M6 1v5M4.500 8v12" stroke="#d8d8d8" strokeWidth="2" fill="none" />
            <path d="M0 11h24" stroke="#d03030" strokeWidth="1.5" />
            <circle cx="16" cy="11" r="3.5" fill="#2464c8" stroke="#123" />
          </svg>
        </TaskIcon>
        <TaskIcon $w={56}>
          <svg width="24" height="16" viewBox="0 0 24 16">
            <rect width="24" height="15.5" rx="1" fill="#f2f2f2" />
            <path d="M1 1l11 9L23 1M1 15l8-7M23 15l-8-7" stroke="#a8a8a8" fill="none" />
          </svg>
        </TaskIcon>
        <TaskIcon $w={42}>
          <svg width="24" height="24" viewBox="0 0 24 24">
            <rect width="24" height="24" fill="#eeeef0" />
            <path d="M2 4h6M17 6h5M2 9h4M8 16h6" stroke="#22308c" strokeWidth="4" strokeDasharray="2 1" />
            <path d="M9 4h5M17 11h6M3 16h5" stroke="#d83030" strokeWidth="4" strokeDasharray="2 1" />
            <path d="M3 14L14 4l2 6z" fill="#9a9a9a" />
          </svg>
        </TaskIcon>
        <TaskIcon $w={53} $shift={3}>
          <svg width="24" height="22" viewBox="0 0 24 22">
            <rect x="8" y="0" width="14" height="18" fill="#1484d8" />
            <rect x="15" y="0" width="7" height="8" fill="#3ab4f0" />
            <path d="M7 11l8 5 9-5v11H7z" fill="#2a9ce4" />
            <rect x="0" y="5" width="12" height="12" rx="1" fill="#0f6cbd" />
            <circle cx="6" cy="11" r="3" fill="none" stroke="#fff" strokeWidth="1.8" />
          </svg>
        </TaskIcon>
        <TaskWindow $w={160} $gap={5} $pl={10} $active $ls={-0.28}>
          <OperaLogo size={23} color="#e5202e" />
          EDCMasterHP - Ec...
        </TaskWindow>

        <Tray>
          <Weather>
            <svg width="24" height="24" viewBox="0 0 24 24">
              <path d="M8 0c3 5 0 10-7 9 2 5 12 4 12-3 0-3-2-5-5-6z" fill="#f5a728" />
              <path d="M6 23a5.500 5.500 0 0 1-.5-10.500 6.500 6.500 0 0 1 12-1A5.800 5.800 0 0 1 18.500 23z" fill="#8fb8f4" />
              <path d="M6 23a6 6 0 0 1-5.500-4h23c-1 3-3 4-5 4z" fill="#6a9aea" />
              <circle cx="18" cy="6" r="6" fill="#d02a22" />
              <text x="18" y="9" fontSize="9" fontWeight="600" textAnchor="middle" fontFamily="Open Sans" fill="#fff">2</text>
            </svg>
            <span>0°C</span>
            <span>Duże zachmurze...</span>
          </Weather>
          <TrayIcons>
            <svg width="14" height="16" viewBox="0 0 14 16" fill="none" stroke="#f2f2f2" strokeWidth="1.4">
              <path d="M1 11l6-6 6 6" />
            </svg>
            <svg width="16" height="16" viewBox="0 0 16 16" fill="none" stroke="#f2f2f2" strokeWidth="1.2">
              <path d="M8 14.500L.6 13.500V2.500L15 .8V9M5 7c1-3 4-3 5-1.500V3M11 7c-1 3-4 3-5.500 1.500V11" />
              <circle cx="12.5" cy="12.5" r="3" fill="#2d78c8" stroke="#2d78c8" />
            </svg>
            <svg width="16" height="16" viewBox="0 0 16 16" fill="none" stroke="#f2f2f2" strokeWidth="1.2">
              <path d="M6 3.500h9.500V12H4V8M9.500 12v2.500M6 14.500h7M.6 1.500H5V5H.6zM2.800 5v3H4" />
            </svg>
            <svg width="17" height="16" viewBox="0 0 17 16" fill="none" stroke="#f2f2f2" strokeWidth="1.2">
              <path d="M1 5.500h2L6.500 2.500v11L3 10.500H1zM9 5.500q1.500 2.500 0 5M11.300 4q2.500 4 0 8M13.600 2.500q3.500 5.500 0 11" />
            </svg>
          </TrayIcons>
          <Lang>POL</Lang>
          <DateTime>
            17:11
            <br />
            01.12.2025
          </DateTime>
          <Notifications width="16" height="17" viewBox="0 0 16 17">
            <path d="M0 0h16v13h-5l-3 3.500L5 13H0z" fill="#fff" />
            <path d="M3 4h10M3 6.700h10M3 9.500h6" stroke="#1f2326" />
          </Notifications>
          <ShowDesktop />
        </Tray>
      </Taskbar>
    </Screen>
  );
};

export default App;
